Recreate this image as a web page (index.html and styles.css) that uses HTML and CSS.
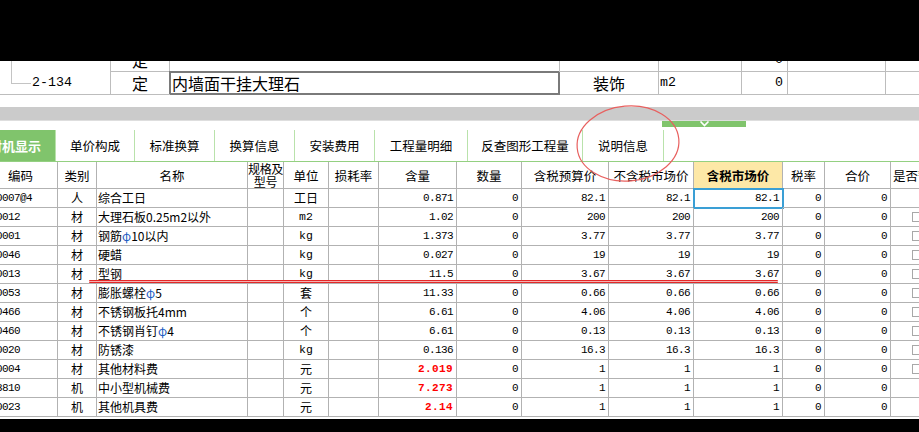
FILE: index.html
```html
<!DOCTYPE html>
<html lang="zh-CN">
<head>
<meta charset="utf-8">
<title>人材机显示</title>
<link rel="stylesheet" href="styles.css">
</head>
<body>
<div class="screen">
  <div class="black-top"></div>

  <div class="upper">
    <div class="urow">
      <div class="uc uc-tree tree-cont"></div>
      <div class="uc uc-type">定</div>
      <div class="uc"></div>
      <div class="uc"></div>
      <div class="uc"></div>
      <div class="uc uc-qty mono16">0</div>
      <div class="uc"></div>
      <div class="uc"></div>
    </div>
    <div class="urow">
      <div class="uc uc-tree tree-end mono16">2-134</div>
      <div class="uc uc-type">定</div>
      <div class="uc uc-name">内墙面干挂大理石</div>
      <div class="uc uc-major">装饰</div>
      <div class="uc uc-unit mono16">m2</div>
      <div class="uc uc-qty mono16">0</div>
      <div class="uc"></div>
      <div class="uc"></div>
    </div>
  </div>

  <div class="gap"></div>
  <div class="splitter"></div>
  <div class="handle-row">
    <div class="handle">
      <svg width="84" height="6" viewBox="0 0 84 6"><polyline points="38.5,0.5 42.5,4.5 46.5,0.5" fill="none" stroke="#ffffff" stroke-width="1.6"/></svg>
    </div>
  </div>

  <div class="tabs">
    <div class="tab tab-active">人材机显示</div>
    <div class="tab tab-w79">单价构成</div>
    <div class="tab tab-w80">标准换算</div>
    <div class="tab tab-w80">换算信息</div>
    <div class="tab tab-w80">安装费用</div>
    <div class="tab tab-w93">工程量明细</div>
    <div class="tab tab-w115">反查图形工程量</div>
    <div class="tab tab-w82 tab-last">说明信息</div>
  </div>

  <div class="grid">
    <div class="gtable">
      <div class="gc gh">编码</div>
      <div class="gc gh">类别</div>
      <div class="gc gh">名称</div>
      <div class="gc gh gh-two">规格及<br>型号</div>
      <div class="gc gh">单位</div>
      <div class="gc gh">损耗率</div>
      <div class="gc gh">含量</div>
      <div class="gc gh">数量</div>
      <div class="gc gh">含税预算价</div>
      <div class="gc gh">不含税市场价</div>
      <div class="gc gh gh-hl">含税市场价</div>
      <div class="gc gh">税率</div>
      <div class="gc gh">合价</div>
      <div class="gc gh gh-left">是否暂估</div>

      <div class="gc code n">0007@4</div><div class="gc c">人</div><div class="gc name">综合工日</div><div class="gc"></div><div class="gc c">工日</div><div class="gc"></div><div class="gc n">0.871</div><div class="gc n">0</div><div class="gc n">82.1</div><div class="gc n">82.1</div><div class="gc n sel">82.1</div><div class="gc n">0</div><div class="gc n">0</div><div class="gc"></div>

      <div class="gc code n">0012</div><div class="gc c">材</div><div class="gc name">大理石板0.25m2以外</div><div class="gc"></div><div class="gc c unit">m2</div><div class="gc"></div><div class="gc n">1.02</div><div class="gc n">0</div><div class="gc n">200</div><div class="gc n">200</div><div class="gc n">200</div><div class="gc n">0</div><div class="gc n">0</div><div class="gc cbc"><span class="cb"></span></div>

      <div class="gc code n">0001</div><div class="gc c">材</div><div class="gc name">钢筋<span class="phi">φ</span>10以内</div><div class="gc"></div><div class="gc c unit">kg</div><div class="gc"></div><div class="gc n">1.373</div><div class="gc n">0</div><div class="gc n">3.77</div><div class="gc n">3.77</div><div class="gc n">3.77</div><div class="gc n">0</div><div class="gc n">0</div><div class="gc cbc"><span class="cb"></span></div>

      <div class="gc code n">0046</div><div class="gc c">材</div><div class="gc name">硬蜡</div><div class="gc"></div><div class="gc c unit">kg</div><div class="gc"></div><div class="gc n">0.027</div><div class="gc n">0</div><div class="gc n">19</div><div class="gc n">19</div><div class="gc n">19</div><div class="gc n">0</div><div class="gc n">0</div><div class="gc cbc"><span class="cb"></span></div>

      <div class="gc code n">0013</div><div class="gc c">材</div><div class="gc name">型钢</div><div class="gc"></div><div class="gc c unit">kg</div><div class="gc"></div><div class="gc n">11.5</div><div class="gc n">0</div><div class="gc n">3.67</div><div class="gc n">3.67</div><div class="gc n">3.67</div><div class="gc n">0</div><div class="gc n">0</div><div class="gc cbc"><span class="cb"></span></div>

      <div class="gc code n">0053</div><div class="gc c">材</div><div class="gc name">膨胀螺栓<span class="phi">φ</span>5</div><div class="gc"></div><div class="gc c">套</div><div class="gc"></div><div class="gc n">11.33</div><div class="gc n">0</div><div class="gc n">0.66</div><div class="gc n">0.66</div><div class="gc n">0.66</div><div class="gc n">0</div><div class="gc n">0</div><div class="gc cbc"><span class="cb"></span></div>

      <div class="gc code n">0466</div><div class="gc c">材</div><div class="gc name">不锈钢板托4mm</div><div class="gc"></div><div class="gc c">个</div><div class="gc"></div><div class="gc n">6.61</div><div class="gc n">0</div><div class="gc n">4.06</div><div class="gc n">4.06</div><div class="gc n">4.06</div><div class="gc n">0</div><div class="gc n">0</div><div class="gc cbc"><span class="cb"></span></div>

      <div class="gc code n">0460</div><div class="gc c">材</div><div class="gc name">不锈钢肖钉<span class="phi">φ</span>4</div><div class="gc"></div><div class="gc c">个</div><div class="gc"></div><div class="gc n">6.61</div><div class="gc n">0</div><div class="gc n">0.13</div><div class="gc n">0.13</div><div class="gc n">0.13</div><div class="gc n">0</div><div class="gc n">0</div><div class="gc cbc"><span class="cb"></span></div>

      <div class="gc code n">0020</div><div class="gc c">材</div><div class="gc name">防锈漆</div><div class="gc"></div><div class="gc c unit">kg</div><div class="gc"></div><div class="gc n">0.136</div><div class="gc n">0</div><div class="gc n">16.3</div><div class="gc n">16.3</div><div class="gc n">16.3</div><div class="gc n">0</div><div class="gc n">0</div><div class="gc cbc"><span class="cb"></span></div>

      <div class="gc code n">0004</div><div class="gc c">材</div><div class="gc name">其他材料费</div><div class="gc"></div><div class="gc c">元</div><div class="gc"></div><div class="gc n red">2.019</div><div class="gc n">0</div><div class="gc n">1</div><div class="gc n">1</div><div class="gc n">1</div><div class="gc n">0</div><div class="gc n">0</div><div class="gc cbc"><span class="cb"></span></div>

      <div class="gc code n">3810</div><div class="gc c">机</div><div class="gc name">中小型机械费</div><div class="gc"></div><div class="gc c">元</div><div class="gc"></div><div class="gc n red">7.273</div><div class="gc n">0</div><div class="gc n">1</div><div class="gc n">1</div><div class="gc n">1</div><div class="gc n">0</div><div class="gc n">0</div><div class="gc"></div>

      <div class="gc code n">0023</div><div class="gc c">机</div><div class="gc name">其他机具费</div><div class="gc"></div><div class="gc c">元</div><div class="gc"></div><div class="gc n red">2.14</div><div class="gc n">0</div><div class="gc n">1</div><div class="gc n">1</div><div class="gc n">1</div><div class="gc n">0</div><div class="gc n">0</div><div class="gc"></div>
    </div>
  </div>

  <div class="black-bottom"></div>

  <div class="mark-line"></div>
  <svg class="mark-circle" width="919" height="432" viewBox="0 0 919 432">
    <ellipse cx="628" cy="143.5" rx="51" ry="37.5" transform="rotate(-5 628 143.5)" fill="none" stroke="#e8605f" stroke-width="1.2"/>
  </svg>
</div>
</body>
</html>
```

FILE: styles.css
```css
* {
  box-sizing: border-box;
  margin: 0;
  padding: 0;
}

html,
body {
  width: 919px;
  height: 432px;
  overflow: hidden;
  background: #ffffff;
}

body {
  font-family: "Noto Sans CJK SC", "Noto Sans", sans-serif;
  color: #000000;
}

.screen {
  position: relative;
  width: 919px;
  height: 432px;
  overflow: hidden;
  display: flex;
  flex-direction: column;
}

.black-top {
  flex: none;
  height: 61px;
  background: #000000;
}

/* ---------- upper list ---------- */
.upper {
  flex: none;
  height: 34px;
  display: flex;
  flex-direction: column;
  justify-content: flex-end;
  overflow: hidden;
  font-size: 16px;
}

.urow {
  flex: none;
  height: 23px;
  display: grid;
  grid-template-columns: 111px 59px 390px 99px 83px 46px 98px 40px;
}

.uc {
  border-right: 1px solid #bdbdbd;
  border-bottom: 1px solid #bdbdbd;
  line-height: 22px;
  white-space: nowrap;
  overflow: hidden;
}

.mono16 {
  font-family: "Liberation Mono", monospace;
  font-size: 13.3px;
}

.tree-cont {
  border-bottom: none;
  background: linear-gradient(#c4c4c4, #c4c4c4) 11px 0 / 1px 100% no-repeat;
}

.tree-end {
  padding-left: 32px;
  background:
    linear-gradient(#c4c4c4, #c4c4c4) 11px 0 / 1px 12px no-repeat,
    linear-gradient(#c4c4c4, #c4c4c4) 11px 11px / 20px 1px no-repeat;
}

.uc-type,
.uc-major {
  text-align: center;
}

.uc-name {
  padding-left: 2px;
  border-right-color: #7a7a7a;
  border-bottom-color: #7a7a7a;
  box-shadow: -1px -1px 0 0 #7a7a7a, inset 1px 1px 0 0 #7a7a7a, inset -1px -1px 0 0 #7a7a7a;
}

.uc-unit {
  padding-left: 1px;
}

.uc-qty {
  text-align: right;
  padding-right: 4px;
}

/* ---------- splitter ---------- */
.gap {
  flex: none;
  height: 12px;
}

.splitter {
  flex: none;
  height: 14px;
  background: #cbcbcb;
  border-bottom: 1px solid #dedede;
}

.handle-row {
  flex: none;
  height: 9px;
}

.handle {
  margin-left: 662px;
  width: 84px;
  height: 6px;
  background: #80c46c;
  display: flex;
}

/* ---------- tabs ---------- */
.tabs {
  flex: none;
  height: 32px;
  margin-left: -33px;
  display: flex;
  border-bottom: 1px solid #94d081;
}

.tab {
  flex: none;
  height: 31px;
  display: flex;
  align-items: center;
  justify-content: center;
  font-size: 12.5px;
  border-left: 1px solid #b9e2ab;
  white-space: nowrap;
}

.tab-active {
  width: 88px;
  border-left: none;
  background: #80c46c;
  color: #ffffff;
  font-weight: bold;
  font-size: 13px;
  justify-content: flex-end;
  padding-right: 14px;
  overflow: hidden;
}

.tab-w79 { width: 79px; }
.tab-w80 { width: 80px; }
.tab-w93 { width: 93px; }
.tab-w115 { width: 115px; }
.tab-w82 { width: 82px; }

.tab-last {
  border-right: 1px solid #b9e2ab;
}

/* ---------- grid ---------- */
.grid {
  flex: none;
  height: 257px;
  overflow: hidden;
}

.gtable {
  margin-left: -16px;
  width: max-content;
  display: grid;
  grid-template-columns: 74px 39px 151px 36px 45px 50px 78px 65px 87px 85px 89px 42px 66px 60px;
  grid-template-rows: 27px;
  grid-auto-rows: 19px;
}

.gc {
  border-right: 1px solid #b2b2b2;
  border-bottom: 1px solid #b2b2b2;
  font-size: 12px;
  line-height: 18px;
  white-space: nowrap;
  overflow: hidden;
}

.gh {
  display: flex;
  align-items: center;
  justify-content: center;
  text-align: center;
  font-size: 12.5px;
  line-height: 13px;
}

.gh-two {
  font-size: 12px;
  line-height: 13px;
  letter-spacing: -0.3px;
}

.gh-hl {
  background: #fde8a7;
  font-weight: bold;
}

.gh-left {
  justify-content: flex-start;
  padding-left: 2px;
}

.n {
  text-align: right;
  padding-right: 3px;
  font-family: "Liberation Mono", monospace;
  font-size: 11px;
  letter-spacing: -0.6px;
}

.code {
  text-align: left;
  padding-left: 12px;
  padding-right: 0;
}

.c {
  text-align: center;
}

.unit {
  font-family: "Liberation Mono", monospace;
  font-size: 11.5px;
}

.name {
  padding-left: 1px;
}

.phi {
  color: #1f5fc4;
}

.red {
  color: #ff0000;
  font-weight: bold;
  letter-spacing: 0.4px;
}

.sel {
  outline: 2px solid #3a9fd5;
  outline-offset: -1px;
}

.cbc {
  display: flex;
  align-items: center;
  padding-left: 21px;
}

.cb {
  display: block;
  width: 10px;
  height: 10px;
  border: 1px solid #a8a8a8;
  background: #ffffff;
}

.black-bottom {
  flex: none;
  height: 13px;
  background: #000000;
}

/* ---------- annotations ---------- */
.mark-line {
  position: absolute;
  top: 280px;
  left: 89px;
  width: 689px;
  height: 3px;
  border-top: 1px solid #e42828;
  border-bottom: 1px solid #e42828;
  background: #f4b0b0;
  border-radius: 1px;
}

.mark-circle {
  position: absolute;
  top: 0;
  left: 0;
  pointer-events: none;
}
```
